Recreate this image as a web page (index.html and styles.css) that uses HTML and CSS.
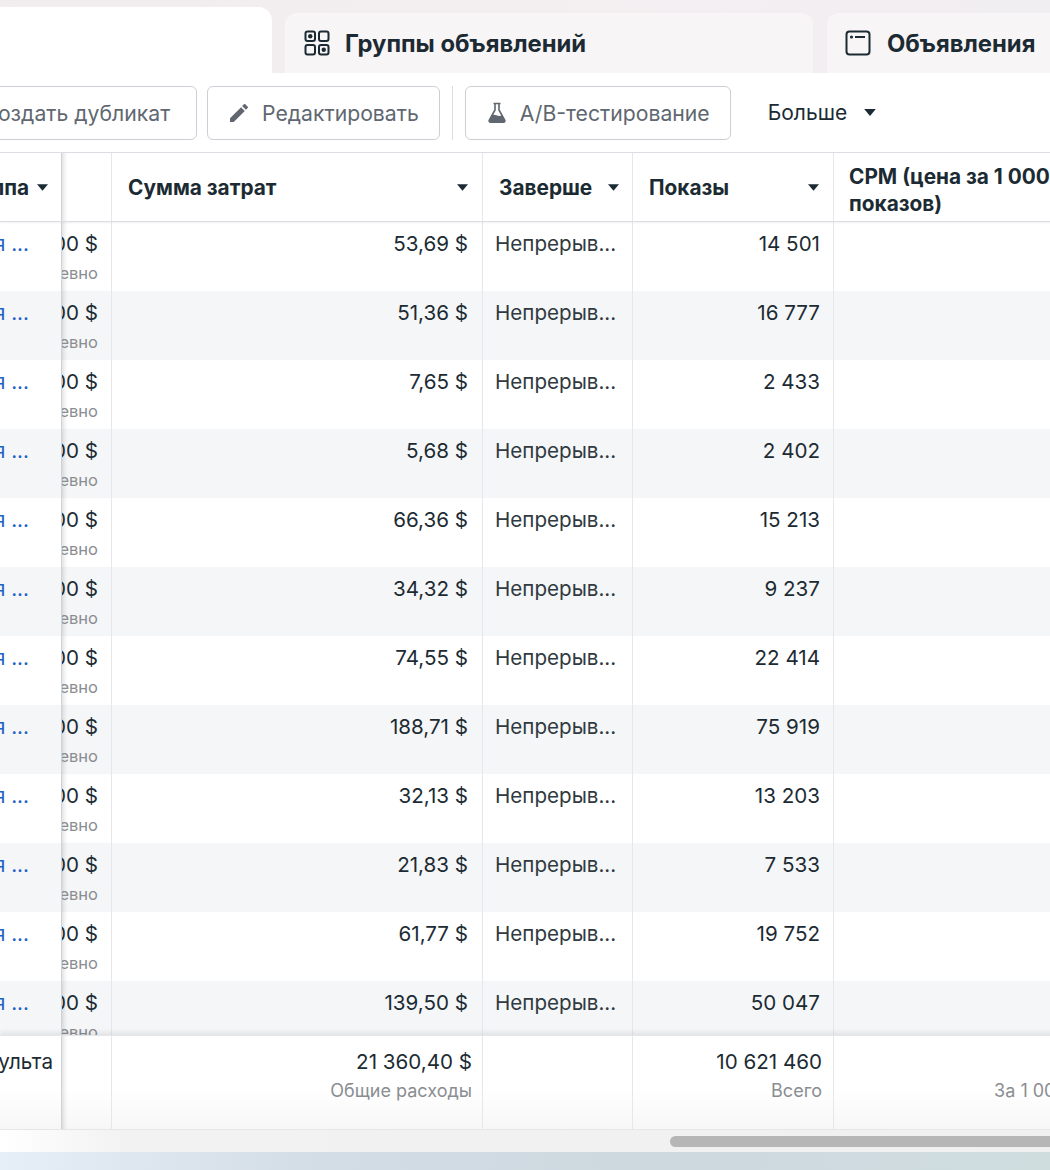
FILE: index.html
```html
<!DOCTYPE html>
<html lang="ru">
<head>
<meta charset="utf-8">
<title>Ads</title>
<link rel="stylesheet" href="styles.css">
</head>
<body>
<div class="page">
  <div class="tabs">
    <div class="tab tab-active"></div>
    <div class="tab tab-groups">
      <svg class="tab-icon" viewBox="0 0 26 26" width="26" height="26"><g fill="none" stroke="#1c2b33" stroke-width="2"><rect x="1.5" y="1.5" width="9.5" height="9.5" rx="2"/><rect x="15" y="1.5" width="9.5" height="9.5" rx="2"/><rect x="1.5" y="15" width="9.5" height="9.5" rx="2"/><rect x="15" y="15" width="9.5" height="9.5" rx="2"/></g><circle cx="6.25" cy="6.25" r="2.2" fill="#1c2b33"/><circle cx="19.75" cy="19.75" r="2.2" fill="#1c2b33"/></svg>
      <span>Группы объявлений</span>
    </div>
    <div class="tab tab-ads">
      <svg class="tab-icon" viewBox="0 0 26 26" width="26" height="26"><rect x="1.5" y="1.5" width="23" height="23" rx="3" fill="none" stroke="#1c2b33" stroke-width="2"/><circle cx="6.5" cy="7" r="1.6" fill="#1c2b33"/><path d="M10 7h10" stroke="#1c2b33" stroke-width="2"/></svg>
      <span>Объявления</span>
    </div>
  </div>

  <div class="toolbar">
    <button class="btn btn-dup"><span>Создать дубликат</span></button>
    <button class="btn"><svg viewBox="0 0 24 24" width="24" height="24"><path fill="#606770" d="M3 17.25V21h3.75L17.81 9.940l-3.75-3.75L3 17.25zm17.71-10.21a1 1 0 000-1.41l-2.34-2.34a1 1 0 00-1.41 0l-1.83 1.83 3.75 3.75 1.83-1.83z"/></svg><span>Редактировать</span></button>
    <div class="sep"></div>
    <button class="btn"><svg viewBox="0 0 24 24" width="24" height="24"><path d="M8.5 2.5h7M10 2.5v6.5L4.3 19.2a1.4 1.4 0 0 0 1.2 2.1h13a1.4 1.4 0 0 0 1.2-2.1L14 9V2.5" fill="none" stroke="#606770" stroke-width="1.6" stroke-linejoin="round"/><path d="M6.8 14.2c2-1 3.6-.2 5.2.3 1.6.5 3.3.6 5.2-.3l2.3 4.6a1.4 1.4 0 0 1-1.2 2.1H5.6a1.4 1.4 0 0 1-1.2-2.1z" fill="#606770"/></svg><span>A/B-тестирование</span></button>
    <button class="more"><span>Больше</span><svg class="caret" viewBox="0 0 10 6" width="12" height="7"><path d="M0 0h10L5 6z" fill="#1c2b33"/></svg></button>
  </div>

  <div class="table">
    <div class="row head">
      <div class="cell c-a"><span>Группа</span><svg class="caret" viewBox="0 0 10 6" width="11" height="7"><path d="M0 0h10L5 6z" fill="#1c2b33"/></svg></div>
      <div class="cell c-b"></div>
      <div class="cell c-c"><span class="grow">Сумма затрат</span><svg class="caret" viewBox="0 0 10 6" width="11" height="7"><path d="M0 0h10L5 6z" fill="#1c2b33"/></svg></div>
      <div class="cell c-d"><span class="grow">Заверше</span><svg class="caret" viewBox="0 0 10 6" width="11" height="7"><path d="M0 0h10L5 6z" fill="#1c2b33"/></svg></div>
      <div class="cell c-e"><span class="grow">Показы</span><svg class="caret" viewBox="0 0 10 6" width="11" height="7"><path d="M0 0h10L5 6z" fill="#1c2b33"/></svg></div>
      <div class="cell c-f"><span class="wrap">CPM (цена за 1 000 показов)</span></div>
    </div>

    <div class="body">
      <div class="row r"><div class="cell c-a"><a>Кампания ...</a></div><div class="cell c-b"><div class="stack"><span>100,00 $</span><small>Ежедневно</small></div></div><div class="cell c-c num">53,69 $</div><div class="cell c-d">Непрерыв...</div><div class="cell c-e num">14 501</div><div class="cell c-f"></div></div>
      <div class="row r"><div class="cell c-a"><a>Кампания ...</a></div><div class="cell c-b"><div class="stack"><span>100,00 $</span><small>Ежедневно</small></div></div><div class="cell c-c num">51,36 $</div><div class="cell c-d">Непрерыв...</div><div class="cell c-e num">16 777</div><div class="cell c-f"></div></div>
      <div class="row r"><div class="cell c-a"><a>Кампания ...</a></div><div class="cell c-b"><div class="stack"><span>100,00 $</span><small>Ежедневно</small></div></div><div class="cell c-c num">7,65 $</div><div class="cell c-d">Непрерыв...</div><div class="cell c-e num">2 433</div><div class="cell c-f"></div></div>
      <div class="row r"><div class="cell c-a"><a>Кампания ...</a></div><div class="cell c-b"><div class="stack"><span>100,00 $</span><small>Ежедневно</small></div></div><div class="cell c-c num">5,68 $</div><div class="cell c-d">Непрерыв...</div><div class="cell c-e num">2 402</div><div class="cell c-f"></div></div>
      <div class="row r"><div class="cell c-a"><a>Кампания ...</a></div><div class="cell c-b"><div class="stack"><span>100,00 $</span><small>Ежедневно</small></div></div><div class="cell c-c num">66,36 $</div><div class="cell c-d">Непрерыв...</div><div class="cell c-e num">15 213</div><div class="cell c-f"></div></div>
      <div class="row r"><div class="cell c-a"><a>Кампания ...</a></div><div class="cell c-b"><div class="stack"><span>100,00 $</span><small>Ежедневно</small></div></div><div class="cell c-c num">34,32 $</div><div class="cell c-d">Непрерыв...</div><div class="cell c-e num">9 237</div><div class="cell c-f"></div></div>
      <div class="row r"><div class="cell c-a"><a>Кампания ...</a></div><div class="cell c-b"><div class="stack"><span>100,00 $</span><small>Ежедневно</small></div></div><div class="cell c-c num">74,55 $</div><div class="cell c-d">Непрерыв...</div><div class="cell c-e num">22 414</div><div class="cell c-f"></div></div>
      <div class="row r"><div class="cell c-a"><a>Кампания ...</a></div><div class="cell c-b"><div class="stack"><span>100,00 $</span><small>Ежедневно</small></div></div><div class="cell c-c num">188,71 $</div><div class="cell c-d">Непрерыв...</div><div class="cell c-e num">75 919</div><div class="cell c-f"></div></div>
      <div class="row r"><div class="cell c-a"><a>Кампания ...</a></div><div class="cell c-b"><div class="stack"><span>100,00 $</span><small>Ежедневно</small></div></div><div class="cell c-c num">32,13 $</div><div class="cell c-d">Непрерыв...</div><div class="cell c-e num">13 203</div><div class="cell c-f"></div></div>
      <div class="row r"><div class="cell c-a"><a>Кампания ...</a></div><div class="cell c-b"><div class="stack"><span>100,00 $</span><small>Ежедневно</small></div></div><div class="cell c-c num">21,83 $</div><div class="cell c-d">Непрерыв...</div><div class="cell c-e num">7 533</div><div class="cell c-f"></div></div>
      <div class="row r"><div class="cell c-a"><a>Кампания ...</a></div><div class="cell c-b"><div class="stack"><span>100,00 $</span><small>Ежедневно</small></div></div><div class="cell c-c num">61,77 $</div><div class="cell c-d">Непрерыв...</div><div class="cell c-e num">19 752</div><div class="cell c-f"></div></div>
      <div class="row r"><div class="cell c-a"><a>Кампания ...</a></div><div class="cell c-b"><div class="stack"><span>100,00 $</span><small>Ежедневно</small></div></div><div class="cell c-c num">139,50 $</div><div class="cell c-d">Непрерыв...</div><div class="cell c-e num">50 047</div><div class="cell c-f"></div></div>
    </div>

    <div class="row foot">
      <div class="cell c-a"><span>Результа</span></div>
      <div class="cell c-b"></div>
      <div class="cell c-c num"><div class="stack"><span>21 360,40 $</span><small>Общие расходы</small></div></div>
      <div class="cell c-d"></div>
      <div class="cell c-e num"><div class="stack"><span>10 621 460</span><small>Всего</small></div></div>
      <div class="cell c-f num"><div class="stack"><span>&nbsp;</span><small>За 1 000 показов</small></div></div>
    </div>
  </div>

  <div class="scroll"><div class="thumb"></div></div>
  <div class="desk"></div>
</div>
</body>
</html>
```

FILE: styles.css
```css
* { box-sizing: border-box; }
html, body { margin: 0; padding: 0; }
body {
  width: 1050px;
  height: 1170px;
  overflow: hidden;
  font-family: "Inter", "Noto Sans", "Liberation Sans", sans-serif;
  color: #1c2b33;
  background: #ffffff;
}
.page {
  width: 1050px;
  height: 1170px;
  display: flex;
  flex-direction: column;
  overflow: hidden;
}

/* Tabs */
.tabs {
  height: 73px;
  flex: none;
  display: flex;
  align-items: flex-end;
  background: linear-gradient(90deg, #f1eced 0%, #f3eff1 50%, #f1eef2 100%);
  overflow: hidden;
}
.tab {
  flex: none;
  display: flex;
  align-items: center;
  font-weight: 700;
  font-size: 23.8px;
  color: #1c2b33;
  white-space: nowrap;
}
.tab-active {
  width: 272px;
  height: 66px;
  background: #ffffff;
  border-top-right-radius: 14px;
}
.tab-groups {
  width: 528px;
  height: 60px;
  margin-left: 13px;
  padding-left: 19px;
  gap: 15px;
  background: #f8f5f6;
  border-radius: 12px 12px 0 0;
}
.tab-ads {
  width: 260px;
  height: 60px;
  margin-left: 14px;
  padding-left: 18px;
  gap: 16px;
  background: #f8f5f6;
  border-radius: 12px 12px 0 0;
}
.tab-icon { flex: none; }

/* Toolbar */
.toolbar {
  height: 79px;
  flex: none;
  display: flex;
  align-items: center;
  background: #fff;
  white-space: nowrap;
}
.btn {
  flex: none;
  height: 54px;
  display: flex;
  align-items: center;
  gap: 11px;
  padding: 0 20px 0 19px;
  border: 1px solid #ccd0d5;
  border-radius: 6px;
  background: #fff;
  font-family: inherit;
  font-size: 21.2px;
  color: #606770;
  margin-left: 10px;
}
.btn-dup {
  width: 260px;
  margin-left: -63px;
  justify-content: flex-end;
  padding-right: 26px;
}
.sep {
  flex: none;
  width: 1px;
  height: 54px;
  background: #dadde1;
  margin: 0 0 0 12px;
}
.sep + .btn { margin-left: 12px; }
.more {
  flex: none;
  display: flex;
  align-items: center;
  gap: 17px;
  margin-left: 19px;
  padding: 0 18px;
  height: 54px;
  border: none;
  background: transparent;
  font-family: inherit;
  font-size: 21px;
  color: #1c2b33;
}

/* Table */
.table {
  flex: none;
  display: flex;
  flex-direction: column;
  width: 1050px;
  overflow: hidden;
}
.row {
  display: grid;
  grid-template-columns: 62px 49px 371px 150px 201px 310px;
  width: 1143px;
}
.cell {
  display: flex;
  min-width: 0;
  overflow: hidden;
  white-space: nowrap;
  border-left: 1px solid #e6e7ea;
}
.c-a {
  border-left: none;
  border-right: 1px solid #d0d2d5;
  justify-content: flex-end;
}
.c-b {
  border-left: none;
  justify-content: flex-end;
  padding-right: 13px;
  box-shadow: inset 5px 0 4px -3px rgba(0, 0, 0, 0.13);
}

.head {
  height: 70px;
  border-top: 1px solid #dadde1;
  border-bottom: 1px solid #dadde1;
  box-shadow: 0 1px 2px rgba(0, 0, 0, 0.06);
  background: #fff;
  position: relative;
  z-index: 3;
  font-weight: 700;
  font-size: 20.8px;
}
.head .cell { align-items: center; }
.head .c-a { padding-right: 13px; gap: 8px; }
.head .c-c, .head .c-d, .head .c-e { padding: 0 14px 0 16px; gap: 8px; }
.head .c-d { padding-right: 13px; }
.grow { flex: 1; overflow: hidden; }
.head .c-f { align-items: flex-start; padding: 10px 16px 0 15px; }
.wrap { white-space: normal; line-height: 27px; display: block; width: 240px; }
.caret { flex: none; }

.body {
  height: 813px;
  overflow: hidden;
  font-size: 20.6px;
}
.r {
  height: 69px;
  background: #fff;
}
.r:nth-child(even) { background: #f5f6f7; }
.r .cell { align-items: flex-start; padding-top: 10px; line-height: 24px; }
.r .c-a { padding-right: 32px; }
.r .c-a a { color: #2163c4; }
.num { justify-content: flex-end; }
.r .c-c { padding-right: 14px; }
.r .c-d { padding-left: 12px; color: #303a40; }
.r .c-e { padding-right: 13px; }
.stack {
  display: flex;
  flex-direction: column;
  align-items: flex-end;
}
.stack small {
  font-size: 18px;
  line-height: 22px;
  margin-top: 6px;
  color: #8a8d91;
}
.r .c-b .stack small { margin-top: 6px; font-size: 16.5px; }

.foot {
  height: 95px;
  position: relative;
  z-index: 3;
  background: linear-gradient(180deg, #ffffff 0%, #ffffff 55%, #f7f7f7 100%);
  box-shadow: 0 -3px 5px rgba(0, 0, 0, 0.08);
  border-top: 1px solid #e4e6e9;
  border-bottom: 1px solid #e4e6e9;
  font-size: 20.6px;
}
.foot .cell { align-items: flex-start; padding-top: 14px; line-height: 24px; }
.foot .c-a { padding-right: 8px; }
.foot .c-c { padding-right: 10px; }
.foot .c-e { padding-right: 11px; }
.foot .c-f { padding-right: 0; }
.foot .stack small { margin-top: 6px; }

/* Scrollbar */
.scroll {
  height: 22px;
  flex: none;
  background: linear-gradient(90deg, #ffffff 0%, #f2f2f2 12%, #f0f0f0 100%);
  padding-top: 6px;
}
.thumb {
  margin-left: 670px;
  width: 400px;
  height: 11px;
  border-radius: 6px;
  background: #b6b6b6;
}
.desk {
  flex: 1;
  background: linear-gradient(90deg, #e6eef7 0%, #d3dde6 30%, #cdd8df 60%, #d0dddf 100%);
}
```
